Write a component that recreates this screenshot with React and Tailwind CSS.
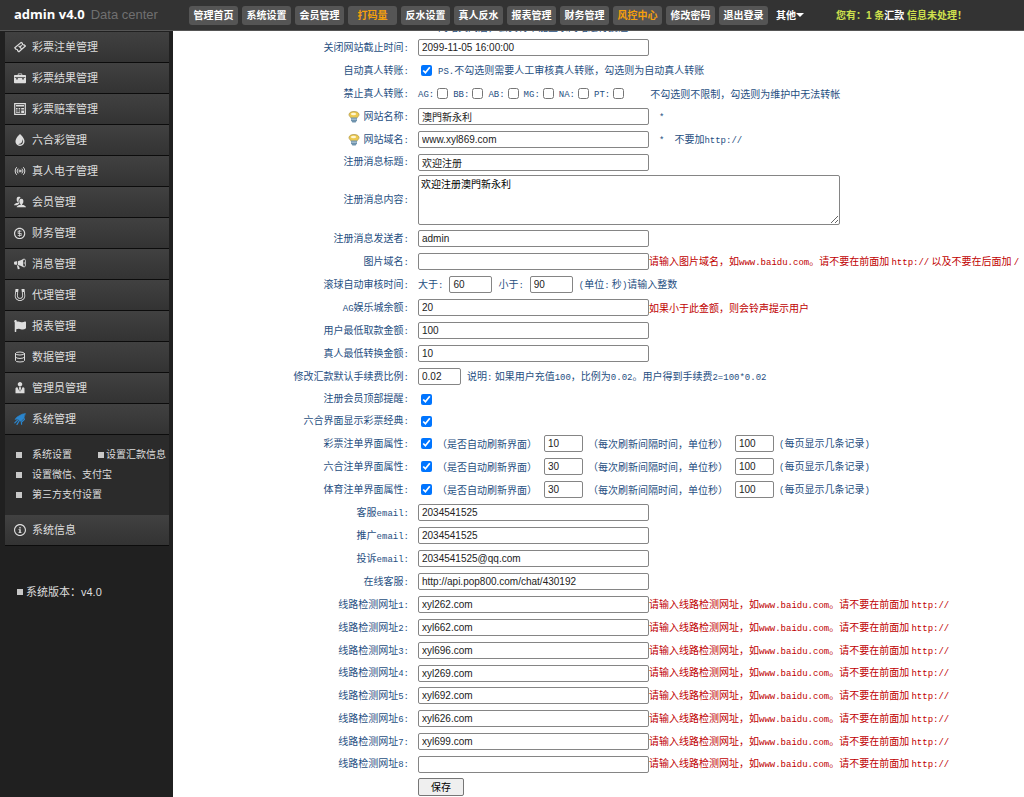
import React from 'react'
import { Database, Radio } from 'lucide-react'
import { FaFlag } from 'react-icons/fa'
import {
    ImBriefcase, ImDroplet, ImUsers, ImCoinDollar, ImBullhorn, ImMagnet, ImUserTie, ImInfo
} from 'react-icons/im'

const TicketIcon = ({ className }) => (
    <svg viewBox="0 0 12 12" className={className} fill="none" stroke="currentColor" strokeWidth="1.200" strokeLinejoin="round">
        <path d="M.8 6.800L7.200 1.400l1.200.9a1.200 1.200 0 0 0 1.600 1.500l1.400 1.200L4.900 10.800l-1.300-1a1.200 1.200 0 0 0-1.500-1.500z" />
        <path d="M4.600 4.800l3 3M6 6.400l1.600-2.200" />
    </svg>
)

const OddsIcon = ({ className }) => (
    <svg viewBox="0 0 12 12" className={className}>
        <path d="M.7.700h10.600v10.600H.7z" fill="none" stroke="currentColor" strokeWidth="1.200" />
        <path d="M2 2h8v1.600H2zM2 5h1.600v1.400H2zM4.600 5h1.600v1.400H4.600zM7.200 5H10v1.400H7.200zM2 7.400h1.600v1H2zM4.600 7.400h1.600v1H4.600zM7.200 7.400H10V10H7.200zM2 9.200h4.200v.8H2z" fill="currentColor" />
    </svg>
)

const SystemIcon = ({ className }) => (
    <svg viewBox="0 0 12 12" className={className} fill="none" stroke="currentColor" strokeLinecap="round">
        <path d="M11.200 .600L8 1.200 3 4l-2 2.400 2.600-.4L7 8.400 9.600 5.200z" fill="currentColor" strokeWidth=".6" />
        <path d="M3.800 6.800L.8 9.800M5.200 7.800L3 11.400M9 3.200l1.400 3.200-3 2.800.2 2" strokeWidth="1.200" />
    </svg>
)

const navItems = [
    { name: '管理首页' },
    { name: '系统设置' },
    { name: '会员管理' },
    { name: '打码量', hot: true },
    { name: '反水设置' },
    { name: '真人反水' },
    { name: '报表管理' },
    { name: '财务管理' },
    { name: '风控中心', hot: true },
    { name: '修改密码' },
    { name: '退出登录' },
]

const menuItems = [
    { name: '彩票注单管理', icon: TicketIcon },
    { name: '彩票结果管理', icon: ImBriefcase },
    { name: '彩票赔率管理', icon: OddsIcon },
    { name: '六合彩管理', icon: ImDroplet },
    { name: '真人电子管理', icon: Radio },
    { name: '会员管理', icon: ImUsers },
    { name: '财务管理', icon: ImCoinDollar },
    { name: '消息管理', icon: ImBullhorn },
    { name: '代理管理', icon: ImMagnet },
    { name: '报表管理', icon: FaFlag },
    { name: '数据管理', icon: Database },
    { name: '管理员管理', icon: ImUserTie },
    { name: '系统管理', icon: SystemIcon, iconClass: 'text-[#2a86cf]' },
]

const transferBans = ['AG', 'BB', 'AB', 'MG', 'NA', 'PT']

const refreshRows = [
    { id: 'lottery', label: '彩票注单界面属性:', seconds: '10' },
    { id: 'liuhe', label: '六合注单界面属性:', seconds: '30' },
    { id: 'sports', label: '体育注单界面属性:', seconds: '30' },
]

const lines = ['xyl262.com', 'xyl662.com', 'xyl696.com', 'xyl269.com', 'xyl692.com', 'xyl626.com', 'xyl699.com', '']

// Latin runs are set in a smaller monospace so they take about half a Chinese character
const Mixed = ({ text }) => (
    <span>
        {text.split(/([\x21-\x7e]+)/).map((part, i) =>
            i % 2 ? <span key={i} className="font-['Liberation_Mono',monospace] text-[9px]">{part}</span> : part
        )}
    </span>
)

const Bulb = () => (
    <svg viewBox="0 0 12 12" className="w-3 h-3 mr-1 shrink-0">
        <path d="M6 .5C3 .5 1 1.800 1 3.600c0 1.700 1.700 2.400 2.300 4h5.400c.6-1.600 2.300-2.300 2.300-4C11 1.800 9 .5 6 .5z" fill="#ecc94f" stroke="#a9903f" strokeWidth=".7" />
        <ellipse cx="5.500" cy="3" rx="2.600" ry="1.300" fill="#fff6cf" />
        <path d="M3 6.400h6v2.800L7.600 11.500H4.400L3 9.200z" fill="#6f93ad" />
        <path d="M3.300 8.200h5.400" stroke="#c9dbe6" strokeWidth=".8" />
    </svg>
)

const Row = ({ label, htmlFor, bulb, height = 'h-[23px]', children }) => (
    <div className={`flex items-center ${height}`}>
        <label htmlFor={htmlFor} className="flex items-center justify-end w-[236px] shrink-0 mr-[9px] whitespace-nowrap">
            {bulb && <Bulb />}
            <Mixed text={label} />
        </label>
        <div className="flex items-center whitespace-nowrap">{children}</div>
    </div>
)

const TextBox = ({ width = 'w-[231px]', ...props }) => (
    <input
        type="text"
        className={`${width} h-[17px] px-[3px] border border-[#858585] rounded-xs bg-white text-[#222] font-['Liberation_Sans','Noto_Sans_CJK_SC',sans-serif] text-[10px]`}
        {...props}
    />
)

const Check = (props) => <input type="checkbox" className="w-[11px] h-[11px] shrink-0 accent-[#0075ff]" {...props} />

const Red = ({ text }) => <span className="text-[#c00000]"><Mixed text={text} /></span>

const Square = () => <span className="w-[6px] h-[6px] shrink-0 bg-[#c8c8c8]"></span>

const Header = () => (
    <header className="flex items-center h-[31px] bg-[#333] border-b border-[#555] whitespace-nowrap overflow-hidden">
        <div className="w-[175px] shrink-0 pl-[14px] flex items-baseline gap-[6px]">
            <h1 className="font-['Open_Sans',sans-serif] font-bold text-[13px] text-white">admin v4.0</h1>
            <span className="text-[13px] text-[#707070]">Data center</span>
        </div>
        <nav className="flex items-center gap-1 ml-[14px] text-[10px] font-bold">
            {navItems.map((item) => (
                <a key={item.name} href="#" className={`w-[49px] h-[19px] leading-[19px] rounded-[3px] bg-[#555] text-center ${item.hot ? 'text-[#f5a00c]' : 'text-white'}`}>
                    {item.name}
                </a>
            ))}
            <button type="button" className="flex items-center ml-1 text-white">
                其他
                <span className="border-x-4 border-t-4 border-x-transparent border-t-white"></span>
            </button>
        </nav>
        <p className="ml-8 text-[10px] font-bold text-[#cfe04d]">
            您有：1 条<a href="#" className="text-white">汇款</a> 信息未处理！
        </p>
    </header>
)

const MenuLink = ({ item }) => {
    const Icon = item.icon
    return (
        <a href="#" className="flex items-center h-[31px] pl-[9px] gap-[6px] bg-linear-to-b from-[#414141] to-[#333] border-b border-[#0c0c0c]">
            <Icon className={`w-3 h-3 ${item.iconClass || ''}`} />
            {item.name}
        </a>
    )
}

const Sidebar = () => (
    <aside className="w-[173px] shrink-0 pl-[5px] pr-1 pt-px bg-[#202020] text-[#ddd] text-[11px] whitespace-nowrap">
        <nav>
            {menuItems.map((item) => <MenuLink key={item.name} item={item} />)}
            <div className="bg-[#2b2b2b] py-[10px] pl-[11px] text-[10px] leading-5">
                <div className="flex items-center">
                    <a href="#" className="flex items-center gap-[10px] w-[82px]"><Square />系统设置</a>
                    <a href="#" className="flex items-center gap-[2px]"><Square />设置汇款信息</a>
                </div>
                <a href="#" className="flex items-center gap-[10px]"><Square />设置微信、支付宝</a>
                <a href="#" className="flex items-center gap-[10px]"><Square />第三方支付设置</a>
            </div>
            <MenuLink item={{ name: '系统信息', icon: ImInfo }} />
        </nav>
        <p className="flex items-center gap-[3px] mt-9 pl-3 leading-5"><Square />系统版本：v4.0</p>
    </aside>
)

const App = () => {
    return (
        <div className="h-screen flex flex-col overflow-hidden bg-white font-['Liberation_Sans','Noto_Sans_CJK_SC',sans-serif]">
            <Header />
            <div className="flex flex-1 min-h-0">
                <Sidebar />
                <main className="flex-1 min-w-0 overflow-hidden font-['Noto_Sans_CJK_SC',sans-serif] text-[10px] text-[#1f4f82]">
                    <form className="-mt-[18px]">
                        <Row label="">
                            <span className="ml-5 pt-1">网站关闭后，会员将不能登录网站进行投注</span>
                        </Row>
                        <Row label="关闭网站截止时间:" htmlFor="closeTime">
                            <TextBox id="closeTime" defaultValue="2099-11-05 16:00:00" />
                        </Row>
                        <Row label="自动真人转账:" htmlFor="autoTransfer">
                            <div className="flex items-center gap-[6px] pl-[3px]">
                                <Check id="autoTransfer" defaultChecked />
                                <Mixed text="PS.不勾选则需要人工审核真人转账，勾选则为自动真人转账" />
                            </div>
                        </Row>
                        <Row label="禁止真人转账:">
                            <div className="flex items-center gap-[5px]">
                                {transferBans.map((name) => (
                                    <label key={name} className="flex items-center gap-[3px]"><Mixed text={`${name}:`} /><Check /></label>
                                ))}
                            </div>
                            <span className="ml-[26px]">不勾选则不限制，勾选则为维护中无法转帐</span>
                        </Row>
                        <Row label="网站名称:" htmlFor="siteName" bulb>
                            <TextBox id="siteName" defaultValue="澳門新永利" />
                            <span className="ml-[10px]"><Mixed text="*" /></span>
                        </Row>
                        <Row label="网站域名:" htmlFor="siteDomain" bulb>
                            <TextBox id="siteDomain" defaultValue="www.xyl869.com" />
                            <div className="flex gap-[10px] ml-[10px]"><Mixed text="*" /><Mixed text="不要加http://" /></div>
                        </Row>
                        <Row label="注册消息标题:" htmlFor="msgTitle" height="h-[22px]">
                            <TextBox id="msgTitle" defaultValue="欢迎注册" />
                        </Row>
                        <Row label="注册消息内容:" htmlFor="msgBody" height="h-[54px]">
                            <textarea id="msgBody" defaultValue="欢迎注册澳門新永利" className="block w-[422px] h-[50px] px-[2px] border border-[#858585] rounded-xs text-black text-[10px]" />
                        </Row>
                        <Row label="注册消息发送者:" htmlFor="msgSender">
                            <TextBox id="msgSender" defaultValue="admin" />
                        </Row>
                        <Row label="图片域名:" htmlFor="imgDomain">
                            <TextBox id="imgDomain" />
                            <Red text="请输入图片域名，如www.baidu.com。请不要在前面加 http:// 以及不要在后面加 /" />
                        </Row>
                        <Row label="滚球自动审核时间:" htmlFor="auditMin">
                            <div className="flex items-center gap-[6px]">
                                <Mixed text="大于:" />
                                <TextBox id="auditMin" width="w-[43px]" defaultValue="60" />
                                <label htmlFor="auditMax"><Mixed text="小于:" /></label>
                                <TextBox id="auditMax" width="w-[43px]" defaultValue="90" />
                                <Mixed text="(单位: 秒)请输入整数" />
                            </div>
                        </Row>
                        <Row label="AG娱乐城余额:" htmlFor="agBalance">
                            <TextBox id="agBalance" defaultValue="20" />
                            <Red text="如果小于此金额，则会铃声提示用户" />
                        </Row>
                        <Row label="用户最低取款金额:" htmlFor="minWithdraw">
                            <TextBox id="minWithdraw" defaultValue="100" />
                        </Row>
                        <Row label="真人最低转换金额:" htmlFor="minConvert">
                            <TextBox id="minConvert" defaultValue="10" />
                        </Row>
                        <Row label="修改汇款默认手续费比例:" htmlFor="feeRate">
                            <TextBox id="feeRate" width="w-[43px]" defaultValue="0.02" />
                            <span className="ml-[6px]"><Mixed text="说明: 如果用户充值100，比例为0.02。用户得到手续费2=100*0.02" /></span>
                        </Row>
                        <Row label="注册会员顶部提醒:" htmlFor="topRemind" height="h-[22px]">
                            <div className="flex pl-[3px]"><Check id="topRemind" defaultChecked /></div>
                        </Row>
                        <Row label="六合界面显示彩票经典:" htmlFor="showClassic" height="h-[22px]">
                            <div className="flex pl-[3px]"><Check id="showClassic" defaultChecked /></div>
                        </Row>
                        {refreshRows.map((row) => (
                            <Row key={row.id} label={row.label} htmlFor={`${row.id}Auto`}>
                                <div className="flex items-center gap-[5px] pl-[3px]">
                                    <Check id={`${row.id}Auto`} defaultChecked />
                                    <span className="w-[102px]">（是否自动刷新界面）</span>
                                    <TextBox width="w-[39px]" defaultValue={row.seconds} aria-label="刷新间隔时间" />
                                    <span className="w-[142px]">（每次刷新间隔时间，单位秒）</span>
                                    <TextBox width="w-[39px]" defaultValue="100" aria-label="每页显示条数" />
                                    <Mixed text="(每页显示几条记录)" />
                                </div>
                            </Row>
                        ))}
                        <Row label="客服email:" htmlFor="serviceMail">
                            <TextBox id="serviceMail" defaultValue="2034541525" />
                        </Row>
                        <Row label="推广email:" htmlFor="promoMail">
                            <TextBox id="promoMail" defaultValue="2034541525" />
                        </Row>
                        <Row label="投诉email:" htmlFor="complainMail">
                            <TextBox id="complainMail" defaultValue="2034541525@qq.com" />
                        </Row>
                        <Row label="在线客服:" htmlFor="onlineService">
                            <TextBox id="onlineService" defaultValue="http://api.pop800.com/chat/430192" />
                        </Row>
                        {lines.map((line, i) => (
                            <Row key={i} label={`线路检测网址${i + 1}:`} htmlFor={`line${i + 1}`} height={i % 4 === 3 ? 'h-[22px]' : 'h-[23px]'}>
                                <TextBox id={`line${i + 1}`} defaultValue={line} />
                                <Red text="请输入线路检测网址，如www.baidu.com。请不要在前面加 http://" />
                            </Row>
                        ))}
                        <Row label="">
                            <button type="button" className="w-[46px] h-[18px] border border-[#767676] rounded-xs bg-[#efefef] text-black text-[10px] leading-4">保存</button>
                        </Row>
                    </form>
                </main>
            </div>
        </div>
    )
}

export default App
